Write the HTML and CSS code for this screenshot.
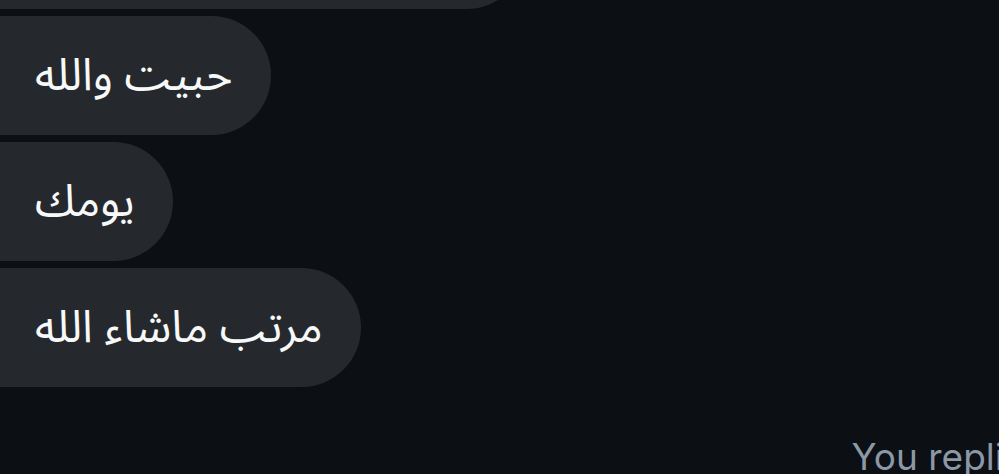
FILE: index.html
```html
<!DOCTYPE html>
<html lang="ar">
<head>
    <meta charset="UTF-8">
    <meta name="viewport" content="width=device-width, initial-scale=1.0">
    <title>Messages</title>
    <link rel="stylesheet" href="styles.css">
</head>
<body>
    <div class="thread">
        <div class="bubble bubble-first"></div>
        <div class="bubble" dir="rtl">حبيت والله</div>
        <div class="bubble" dir="rtl">يومك</div>
        <div class="bubble" dir="rtl">مرتب ماشاء الله</div>
        <div class="status">You replied</div>
    </div>
</body>
</html>
```

FILE: styles.css
```css
/* Base */
* {
    margin: 0;
    padding: 0;
    box-sizing: border-box;
}

html, body {
    height: 100%;
    overflow: hidden;
}

body {
    background-color: #0c0f13;
    font-family: "Noto Sans Arabic", "DejaVu Sans", sans-serif;
}

/* Fil de messages */
.thread {
    display: flex;
    flex-direction: column;
    align-items: flex-start;
    gap: 7px;
}

.bubble {
    height: 119px;
    display: flex;
    align-items: center;
    margin-left: -14px;
    padding: 0 38px 0 49px;
    background-color: #25292e;
    color: #f7f9f9;
    font-size: 45px;
    border-radius: 14px 60px 60px 14px;
}

.bubble-first {
    margin-top: -110px;
    width: 540px;
}

/* Statut */
.status {
    align-self: flex-end;
    margin-top: 44px;
    margin-right: -49px;
    color: #8b98a5;
    font-family: Inter, Roboto, sans-serif;
    font-size: 37px;
    line-height: 37px;
    white-space: nowrap;
}
```
